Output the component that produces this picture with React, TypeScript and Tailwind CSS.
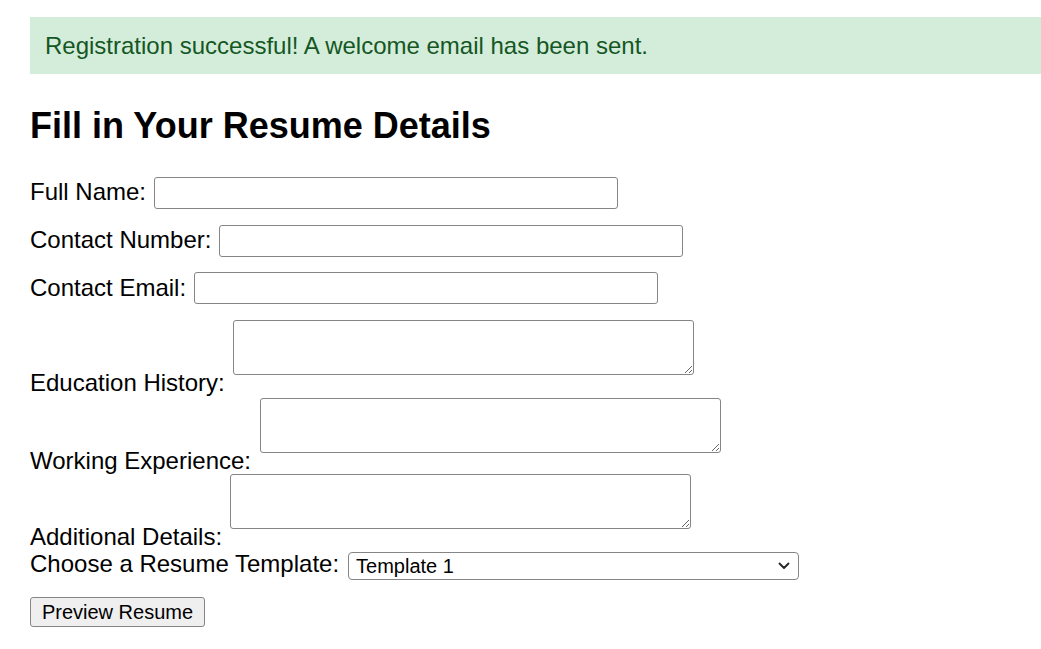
import React from "react";

const labelCls = "text-[24px] leading-[27px] text-black whitespace-nowrap";
const inputCls =
  "h-[32px] w-[464px] border-[1.5px] border-[#858585] rounded-[3px] bg-white outline-none";
const areaCls =
  "h-[55px] w-[461px] border-[1.5px] border-[#858585] rounded-[3px] bg-white outline-none mb-[21px]";

export default function App() {
  return (
    <div
      className="min-h-[649px] w-[1041px] overflow-hidden bg-white pt-[17px] pl-[30px]"
      style={{ fontFamily: '"Liberation Sans", Arial, sans-serif' }}
    >
      <div className="bg-[#d4edda] text-[#155724] p-[15px] text-[24px] leading-[27px]">
        Registration successful! A welcome email has been sent.
      </div>

      <h2 className="mt-[31px] text-[36px] leading-[41px] font-bold text-black">
        Fill in Your Resume Details
      </h2>

      <form className="mt-[31px] flex flex-col" onSubmit={(e) => e.preventDefault()}>
        <div className="flex items-start gap-[8px]">
          <label className={`${labelCls} mt-[1px]`}>Full Name:</label>
          <input type="text" className={inputCls} />
        </div>
        <div className="mt-[16px] flex items-start gap-[8px]">
          <label className={`${labelCls} mt-[1px]`}>Contact Number:</label>
          <input type="text" className={inputCls} />
        </div>
        <div className="mt-[15px] flex items-start gap-[8px]">
          <label className={`${labelCls} mt-[2px]`}>Contact Email:</label>
          <input type="email" className={inputCls} />
        </div>

        <div className="mt-[16px] flex items-end gap-[8px]">
          <label className={labelCls}>Education History:</label>
          <textarea className={areaCls} />
        </div>
        <div className="mt-[1.5px] flex items-end gap-[9px]">
          <label className={labelCls}>Working Experience:</label>
          <textarea className={areaCls} />
        </div>
        <div className="mt-[0.5px] flex items-end gap-[8px]">
          <label className={labelCls}>Additional Details:</label>
          <textarea className={areaCls} />
        </div>

        <div className="flex items-start gap-[9px]">
          <label className={labelCls}>Choose a Resume Template:</label>
          <div className="relative mt-[2px]">
            <select
              className="h-[28px] w-[451px] appearance-none border-[1.5px] border-[#858585] rounded-[4px] bg-white pl-[7px] text-[20px] leading-[24px] text-black outline-none"
              style={{ fontFamily: '"Liberation Sans", Arial, sans-serif' }}
              defaultValue="1"
            >
              <option value="1">Template 1</option>
              <option value="2">Template 2</option>
              <option value="3">Template 3</option>
            </select>
            <svg
              className="pointer-events-none absolute right-[9px] top-[10px]"
              width="12"
              height="8"
              viewBox="0 0 12 8"
              fill="none"
            >
              <polyline
                points="1.5,1.5 6,6 10.5,1.5"
                stroke="#222"
                strokeWidth="1.8"
                strokeLinecap="round"
                strokeLinejoin="round"
              />
            </svg>
          </div>
        </div>

        <div className="mt-[17px]">
          <button
            type="submit"
            className="h-[30px] w-[175px] border-[1.5px] border-[#858585] rounded-[3px] bg-[#efefef] text-[20px] leading-[24px] text-black"
            style={{ fontFamily: '"Liberation Sans", Arial, sans-serif' }}
          >
            Preview Resume
          </button>
        </div>
      </form>
    </div>
  );
}
